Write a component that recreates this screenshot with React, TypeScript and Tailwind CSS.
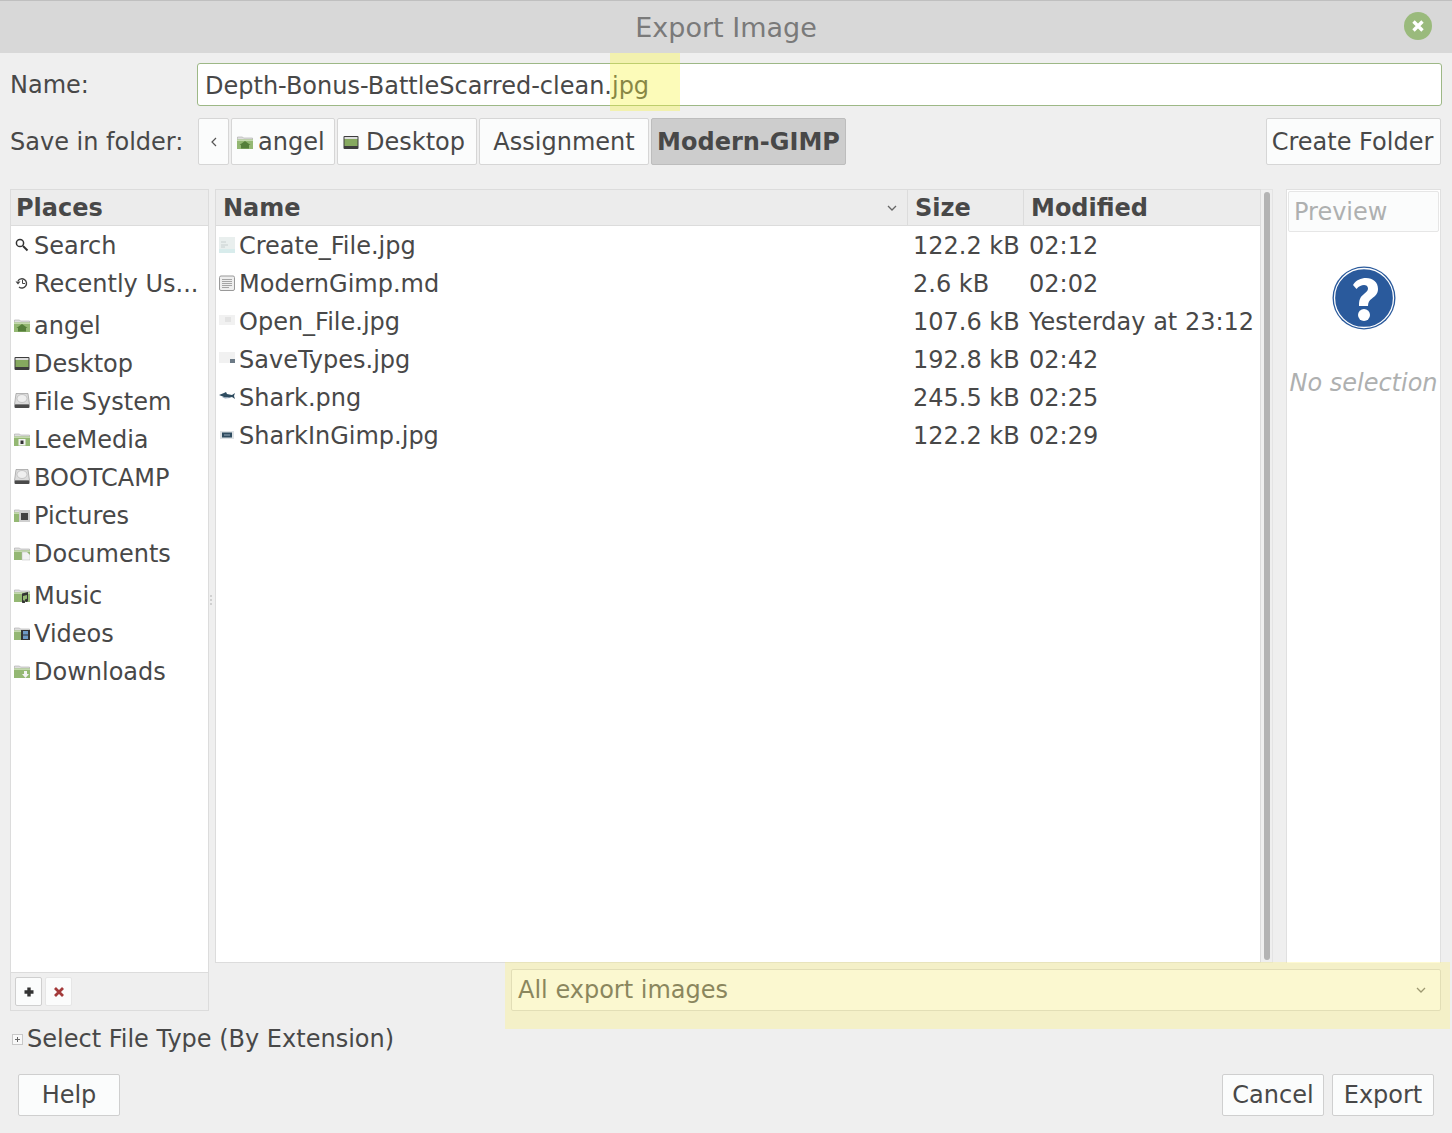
const font = { fontFamily: '"DejaVu Sans", sans-serif' };

function Ico({ kind }: { kind: string }) {
  const folder = (inner: React.ReactNode) => (
    <svg width="16" height="16" viewBox="0 0 16 16" className="shrink-0">
      <path d="M0.5 5.5V3h5l1 1h9v2H.5z" fill="#dedede" stroke="#a8a8a8" strokeWidth=".6" />
      <rect x="0" y="5.500" width="16" height="9.500" fill="#94b873" />
      <rect x="0" y="5.500" width="16" height="1.500" fill="#c4d9ae" />
      {inner}
    </svg>
  );
  if (kind === "search")
    return (
      <svg width="16" height="16" viewBox="0 0 16 16" className="shrink-0">
        <circle cx="6" cy="6" r="3.600" fill="none" stroke="#333" strokeWidth="1.500" />
        <path d="M9 9l4.500 4.500" stroke="#333" strokeWidth="2" />
      </svg>
    );
  if (kind === "recent")
    return (
      <svg width="16" height="16" viewBox="0 0 16 16" className="shrink-0">
        <path d="M4 6a4.600 4.600 0 1 1 1 6" fill="none" stroke="#444" strokeWidth="1.400" />
        <path d="M1.500 6.500h5L4 9.500z" fill="#444" />
        <path d="M8.500 5v3.500h2.500" fill="none" stroke="#444" strokeWidth="1" />
      </svg>
    );
  if (kind === "desktop")
    return (
      <svg width="16" height="16" viewBox="0 0 16 16" className="shrink-0">
        <rect x="0.500" y="2" width="15" height="13" rx="1" fill="#3d3d3d" />
        <rect x="1.500" y="3" width="13" height="2" fill="#ddd" />
        <rect x="1.500" y="5" width="13" height="7" fill="#86a95f" />
      </svg>
    );
  if (kind === "drive")
    return (
      <svg width="16" height="16" viewBox="0 0 16 16" className="shrink-0">
        <path d="M2 0.500h12l1.500 11h-15z" fill="#dcdcdc" stroke="#999" strokeWidth=".7" />
        <ellipse cx="8" cy="5.500" rx="5" ry="4" fill="#efefef" stroke="#b0b0b0" strokeWidth=".6" />
        <rect x="0.500" y="11.500" width="15" height="3.500" rx="1" fill="#4a4a4a" />
      </svg>
    );
  if (kind === "home")
    return folder(<path d="M8 7l-5.500 4H4v3.500h8V11h1.500z" fill="#557f3a" />);
  if (kind === "media")
    return folder(
      <>
        <rect x="4.500" y="8" width="7" height="6.500" fill="#f2f2f2" />
        <rect x="6.500" y="9.500" width="3" height="3.500" fill="#333" />
      </>
    );
  if (kind === "pictures")
    return folder(
      <>
        <rect x="5" y="3" width="11" height="12" fill="#cfcfcf" />
        <rect x="7" y="6" width="7" height="7" fill="#444" />
      </>
    );
  if (kind === "documents") return folder(<path d="M8 7h5l3 3v5H8z" fill="#f2f2f2" stroke="#bbb" strokeWidth=".5" />);
  if (kind === "music")
    return folder(<path d="M8 15a1.500 1.500 0 1 0 1-1.500V9l4-1v4a1.500 1.500 0 1 0 1 1.500V5L8 6.500z" fill="#333" />);
  if (kind === "videos")
    return folder(
      <>
        <rect x="7" y="5" width="9" height="10" fill="#333" />
        <rect x="9" y="6" width="5" height="3.500" fill="#6d9ac4" />
        <rect x="9" y="10.500" width="5" height="3.500" fill="#6d9ac4" />
      </>
    );
  return folder(<path d="M10 8h3v3h2l-3.500 4L8 11h2z" fill="#f2f2f2" />);
}

function Thumb({ kind }: { kind: string }) {
  if (kind === "create")
    return (
      <svg width="16" height="16" viewBox="0 0 16 16" className="shrink-0">
        <rect width="16" height="16" fill="#e9efee" />
        <rect y="12" width="16" height="4" fill="#d8ecec" />
        <path d="M2 5h5M2 8h7M2 10h4" stroke="#c8d0d0" />
      </svg>
    );
  if (kind === "md")
    return (
      <svg width="16" height="16" viewBox="0 0 16 16" className="shrink-0">
        <rect x="0.500" y="1" width="15" height="14.500" rx="1.500" fill="#eee" stroke="#999" />
        <path d="M3 4.500h10M3 6.500h10M3 8.500h10M3 10.500h10M3 12.500h7" stroke="#a5a5a5" />
      </svg>
    );
  if (kind === "open")
    return (
      <svg width="16" height="16" viewBox="0 0 16 16" className="shrink-0">
        <rect y="2" width="16" height="10" fill="#f1f1f1" />
        <rect x="6" y="4" width="6" height="5" fill="#e3e3e3" />
      </svg>
    );
  if (kind === "save")
    return (
      <svg width="16" height="16" viewBox="0 0 16 16" className="shrink-0">
        <rect y="1" width="16" height="11" fill="#f1f1f1" />
        <rect x="11" y="8" width="5" height="4" fill="#6c7a86" />
      </svg>
    );
  if (kind === "shark")
    return (
      <svg width="16" height="16" viewBox="0 0 16 16" className="shrink-0">
        <path d="M0 6l5-2 2-1 1 2 5 1 3-2-1 3 1 3-3-2-4 1-4-1z" fill="#2f4c60" />
        <path d="M3 8l6 0 2 1-5 .500z" fill="#9ab" />
      </svg>
    );
  return (
    <svg width="16" height="16" viewBox="0 0 16 16" className="shrink-0">
      <rect x="1" y="4" width="14" height="8" fill="#dfe3e6" />
      <rect x="3" y="5.500" width="10" height="5" fill="#2f4c60" />
      <path d="M5 8h6" stroke="#9ab" />
    </svg>
  );
}

const places1 = [
  ["search", "Search"],
  ["recent", "Recently Us..."],
];
const places2 = [
  ["home", "angel"],
  ["desktop", "Desktop"],
  ["drive", "File System"],
  ["media", "LeeMedia"],
  ["drive", "BOOTCAMP"],
  ["pictures", "Pictures"],
  ["documents", "Documents"],
];
const places3 = [
  ["music", "Music"],
  ["videos", "Videos"],
  ["downloads", "Downloads"],
];
const files = [
  ["create", "Create_File.jpg", "122.2 kB", "02:12"],
  ["md", "ModernGimp.md", "2.6 kB", "02:02"],
  ["open", "Open_File.jpg", "107.6 kB", "Yesterday at 23:12"],
  ["save", "SaveTypes.jpg", "192.8 kB", "02:42"],
  ["shark", "Shark.png", "245.5 kB", "02:25"],
  ["gimp", "SharkInGimp.jpg", "122.2 kB", "02:29"],
];

function Place({ k, t }: { k: string; t: string }) {
  return (
    <div className="flex h-[38px] items-center gap-[4px] pl-[3px] whitespace-nowrap">
      <Ico kind={k} />
      <span className="pt-[2px]">{t}</span>
    </div>
  );
}

const btn = "flex h-[47px] items-center rounded-[2px] border whitespace-nowrap";
const plain = "border-[#d6d6d6] bg-[#fbfcfc]";
const dlgBtn =
  "flex h-[42px] w-[102px] items-center justify-center rounded-[2px] border border-[#cfcfcf] bg-[#fbfcfc]";

export default function App() {
  return (
    <div
      className="relative flex h-[1133px] w-[1452px] flex-col overflow-hidden bg-[#efefef] text-[24px] leading-[30px] text-[#484848]"
      style={font}
    >
      <div className="flex h-[53px] shrink-0 items-center justify-center border-t border-[#bfbfbf] bg-[#d8d8d8] pt-[2px] text-[27px] text-[#7a7a7a]">
        <span>Export Image</span>
        <div className="absolute top-[12px] left-[1404px] flex h-[28px] w-[28px] items-center justify-center rounded-full bg-[#9aba7c]">
          <svg width="14" height="14" viewBox="0 0 14 14">
            <path d="M2.500 2.500l9 9M11.500 2.500l-9 9" stroke="#fff" strokeWidth="3.400" />
          </svg>
        </div>
      </div>

      <div className="mt-[10px] flex h-[43px] shrink-0 items-center pr-[10px] pl-[10px]">
        <span className="w-[187px]">Name:</span>
        <div className="flex h-[43px] flex-1 items-center rounded-[3px] border border-[#9db886] bg-white pt-[2px] pl-[7px]">
          Depth-Bonus-BattleScarred-clean.jpg
        </div>
      </div>

      <div className="mt-[12px] flex h-[47px] shrink-0 items-center pr-[11px] pl-[10px]">
        <span className="w-[188px]">Save in folder:</span>
        <div className={`${btn} ${plain} w-[31px] justify-center`}>
          <svg width="8" height="12" viewBox="0 0 8 12">
            <path d="M6 2L2 6l4 4" fill="none" stroke="#555" strokeWidth="1.200" />
          </svg>
        </div>
        <div className={`${btn} ${plain} ml-[2px] w-[104px] gap-[5px] pl-[5px]`}>
          <Ico kind="home" />
          <span>angel</span>
        </div>
        <div className={`${btn} ${plain} ml-[2px] w-[140px] gap-[7px] pl-[5px]`}>
          <Ico kind="desktop" />
          <span>Desktop</span>
        </div>
        <div className={`${btn} ${plain} ml-[2px] w-[170px] justify-center`}>Assignment</div>
        <div className={`${btn} ml-[2px] w-[195px] justify-center border-[#bdbdbd] bg-[#cdcdcd] font-bold`}>
          Modern-GIMP
        </div>
        <div className={`${btn} ${plain} ml-auto w-[175px] justify-center pr-[2px]`}>Create Folder</div>
      </div>

      <div className="mt-[24px] flex h-[822px] shrink-0 pl-[10px]">
        <div className="flex h-full w-[199px] shrink-0 flex-col border border-[#dcdcdc]">
          <div className="flex h-[36px] shrink-0 items-center border-b border-[#dcdcdc] bg-[#ececec] pl-[5px] font-bold">
            Places
          </div>
          <div className="flex-1 bg-white">
            <div className="mb-[4px]">
              {places1.map(([k, t]) => (
                <Place key={t} k={k} t={t} />
              ))}
            </div>
            <div className="mb-[4px]">
              {places2.map(([k, t]) => (
                <Place key={t} k={k} t={t} />
              ))}
            </div>
            <div>
              {places3.map(([k, t]) => (
                <Place key={t} k={k} t={t} />
              ))}
            </div>
          </div>
          <div className="flex h-[38px] shrink-0 items-center gap-[3px] border-t border-[#dcdcdc] bg-[#efefef] pl-[4px]">
            <div className="flex h-[29px] w-[27px] items-center justify-center rounded-[2px] border border-[#cfcfcf] bg-[#fbfcfc]">
              <svg width="12" height="12" viewBox="0 0 12 12">
                <path d="M6 1.500v9M1.500 6h9" stroke="#333" strokeWidth="3.400" />
              </svg>
            </div>
            <div className="flex h-[29px] w-[27px] items-center justify-center rounded-[2px] border border-[#e6e6e6] bg-[#fbfcfc]">
              <svg width="12" height="12" viewBox="0 0 12 12">
                <path d="M2 2l8 8M10 2l-8 8" stroke="#a33a3a" strokeWidth="2.800" />
              </svg>
            </div>
          </div>
        </div>

        <div className="relative w-[6px] shrink-0">
          <div className="absolute top-[406px] left-[1px] flex flex-col gap-[2px]">
            <i className="h-[2px] w-[2px] bg-[#d0d0d0]" />
            <i className="h-[2px] w-[2px] bg-[#d0d0d0]" />
            <i className="h-[2px] w-[2px] bg-[#d0d0d0]" />
          </div>
        </div>

        <div className="flex h-[774px] w-[1046px] shrink-0 flex-col border border-[#dcdcdc]">
          <div className="flex h-[36px] shrink-0 border-b border-[#dcdcdc] bg-[#ececec] font-bold">
            <div className="flex w-[692px] items-center justify-between border-r border-[#dcdcdc] pr-[9px] pl-[7px]">
              <span>Name</span>
              <svg width="12" height="8" viewBox="0 0 12 8">
                <path d="M2 2l4 4 4-4" fill="none" stroke="#666" strokeWidth="1.300" />
              </svg>
            </div>
            <div className="flex w-[116px] items-center border-r border-[#dcdcdc] pl-[7px]">Size</div>
            <div className="flex flex-1 items-center pl-[7px]">Modified</div>
          </div>
          <div className="flex-1 bg-white">
            {files.map(([k, n, s, m]) => (
              <div key={n} className="flex h-[38px] items-center whitespace-nowrap">
                <div className="flex w-[692px] items-center gap-[4px] pl-[3px]">
                  <Thumb kind={k} />
                  <span className="pt-[2px]">{n}</span>
                </div>
                <div className="w-[116px] pt-[2px] pl-[5px]">{s}</div>
                <div className="pt-[2px] pl-[5px]">{m}</div>
              </div>
            ))}
          </div>
        </div>

        <div className="flex h-[774px] w-[12px] shrink-0 justify-center border-t border-r border-b border-[#e4e4e4] pt-[2px] pb-[2px]">
          <div className="h-full w-[6px] rounded-full bg-[#b3b3b3]" />
        </div>

        <div className="ml-[13px] flex h-[774px] w-[155px] shrink-0 flex-col border border-b-0 border-[#e0e0e0] bg-white">
          <div className="mx-[1px] mt-[1px] flex h-[41px] shrink-0 items-center rounded-[2px] border border-[#e6e6e6] bg-[#fbfcfc] pl-[5px] text-[#aeb0b0]">
            Preview
          </div>
          <div className="flex flex-col items-center pt-[34px]">
            <svg width="64" height="64" viewBox="0 0 64 64">
              <circle cx="32" cy="32" r="31.500" fill="#2a5a9c" />
              <circle cx="32" cy="32" r="29.500" fill="none" stroke="#fff" strokeWidth="1.300" />
              <path
                d="M21 19c3-5 8-7 13-7 7 0 12 4 12 11 0 5-3 7-6 9.500-3 2-4 4-4 7.500h-9c0-6 1-9 5-12 2.500-2 4-3.500 4-5.500 0-2.500-2-3.500-4-3.500-2.500 0-5 1-7.500 4z"
                fill="#fff"
              />
              <circle cx="32" cy="49" r="6" fill="#fff" />
            </svg>
            <span className="mt-[38px] whitespace-nowrap text-[#aeb0b0] italic">No selection</span>
          </div>
        </div>
      </div>

      <div className="absolute top-[962px] left-[216px] flex h-[67px] w-[1234px] items-start pt-[7px]">
        <div className="ml-[295px] flex h-[42px] w-[930px] items-center justify-between rounded-[2px] border border-[#d3d3d3] bg-[#fbfcfc] pr-[13px] pl-[6px]">
          <span>All export images</span>
          <svg width="12" height="8" viewBox="0 0 12 8">
            <path d="M2 2l4 4 4-4" fill="none" stroke="#666" strokeWidth="1.300" />
          </svg>
        </div>
      </div>

      <div className="mt-[13px] flex h-[30px] shrink-0 items-center gap-[4px] pl-[12px]">
        <div className="flex h-[11px] w-[11px] items-center justify-center border border-[#c8c8c8] bg-[#f8f8f8]">
          <svg width="7" height="7" viewBox="0 0 7 7">
            <path d="M3.500 1v5M1 3.500h5" stroke="#666" />
          </svg>
        </div>
        <span>Select File Type (By Extension)</span>
      </div>

      <div className="mt-[20px] flex shrink-0 pr-[18px] pl-[18px]">
        <div className={dlgBtn}>Help</div>
        <div className={`${dlgBtn} ml-auto`}>Cancel</div>
        <div className={`${dlgBtn} ml-[8px]`}>Export</div>
      </div>

      <div className="pointer-events-none absolute top-[53px] left-[610px] h-[58px] w-[70px] bg-[#f8f341]/[0.37]" />
      <div className="pointer-events-none absolute top-[962px] left-[505px] h-[67px] w-[945px] bg-[#fcf185]/[0.37]" />
    </div>
  );
}
